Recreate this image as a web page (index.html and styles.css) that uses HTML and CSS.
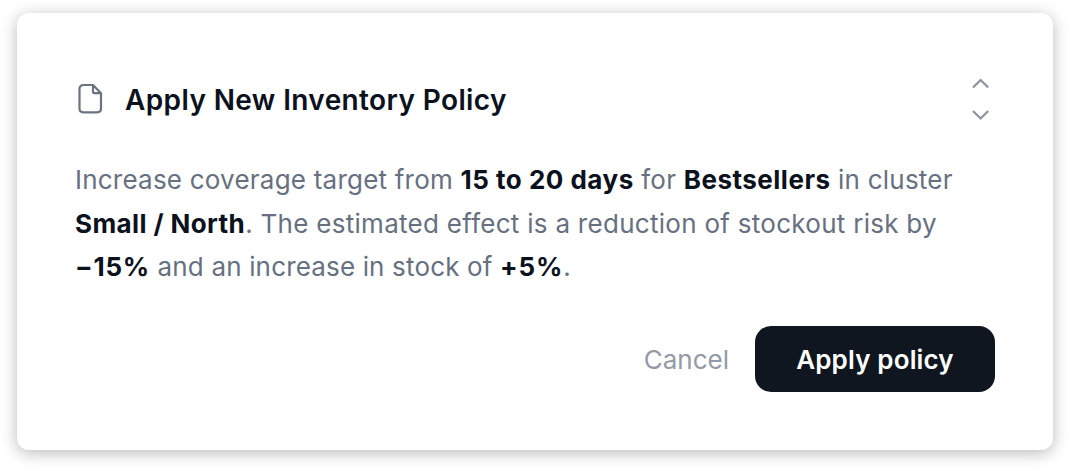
FILE: index.html
```html
<!DOCTYPE html>
<html lang="en">

<head>
    <meta charset="UTF-8">
    <meta name="viewport" content="width=device-width, initial-scale=1.0">
    <title>Apply New Inventory Policy</title>
    <link rel="stylesheet" href="styles.css">
</head>

<body>
    <div class="policy-card">
        <div class="card-header">
            <svg class="file-icon" width="26" height="32" viewBox="0 0 26 32">
                <path d="M16 2H7Q2.500 2 2.500 6V25.500Q2.500 29.300 6.500 29.300H20Q24 29.300 24 25.500V10.200Z" />
                <path d="M16 2V9Q16 10.200 17.200 10.200H24" />
            </svg>
            <h1>Apply New Inventory Policy</h1>
            <div class="arrows">
                <svg width="18" height="12" viewBox="0 0 18 12"><path d="M1 9.500 8.600 2l7.600 7.500" /></svg>
                <svg width="18" height="12" viewBox="0 0 18 12"><path d="M1 2 8.600 9.500l7.600-7.500" /></svg>
            </div>
        </div>
        <p class="description">
            <span class="line line-1">Increase coverage target from <b>15 to 20 days</b> for <b>Bestsellers</b> in cluster</span>
            <span class="line line-2"><b>Small / North</b>. The estimated effect is a reduction of stockout risk by</span>
            <span class="line line-3"><b>−15%</b> and an increase in stock of <b>+5%</b>.</span>
        </p>
        <div class="card-actions">
            <button class="cancel-btn">Cancel</button>
            <button class="apply-btn">Apply policy</button>
        </div>
    </div>
</body>

</html>
```
FILE: styles.css
```css
* {
    box-sizing: border-box;
}

body {
    margin: 0;
    min-height: 471px;
    padding: 13px 17px;
    background-color: white;
    font-family: Inter, "Liberation Sans", sans-serif;
}

.policy-card {
    width: 1036px;
    height: 437px;
    padding: 63px 58px 58px;
    border-radius: 12px;
    background-color: white;
    box-shadow: 0 3px 16px rgba(0, 0, 0, 0.28);
}

.card-header {
    display: flex;
    align-items: center;
    height: 46px;
}

.file-icon {
    margin: 0 22px 0 2px;
    fill: none;
    stroke: #6b7280;
    stroke-width: 2.2;
    stroke-linejoin: round;
}

h1 {
    margin: 2px 0 0;
    font-size: 28px;
    font-weight: 600;
    letter-spacing: 0.38px;
    color: #0b111d;
}

.arrows {
    display: flex;
    flex-direction: column;
    gap: 19px;
    margin-left: auto;
    margin-right: 5px;
}

.arrows svg {
    fill: none;
    stroke: #8c94a1;
    stroke-width: 2.3;
}

.description {
    margin: 36px 0 0;
    font-size: 26px;
    line-height: 43.500px;
    letter-spacing: 0.22px;
    color: #667080;
}

.line {
    display: block;
    white-space: nowrap;
}

.line-2 {
    letter-spacing: 0.28px;
}

.line-3 {
    letter-spacing: 0.16px;
}

.description b {
    font-weight: 650;
    letter-spacing: 0.5px;
    color: #0b111d;
}

.line-2 b {
    letter-spacing: 0.4px;
}

.line-3 b {
    letter-spacing: 0.8px;
}

.card-actions {
    display: flex;
    justify-content: flex-end;
    margin-top: 37px;
}

button {
    border: none;
    padding: 0;
    font-family: inherit;
    font-size: 26px;
    cursor: pointer;
}

.cancel-btn {
    margin-right: 26px;
    padding-top: 2px;
    background: none;
    color: #929aa7;
}

.apply-btn {
    width: 240px;
    height: 66px;
    padding-top: 2px;
    border-radius: 16px;
    background-color: #101620;
    color: white;
    font-weight: 600;
    letter-spacing: 0.15px;
}
```
